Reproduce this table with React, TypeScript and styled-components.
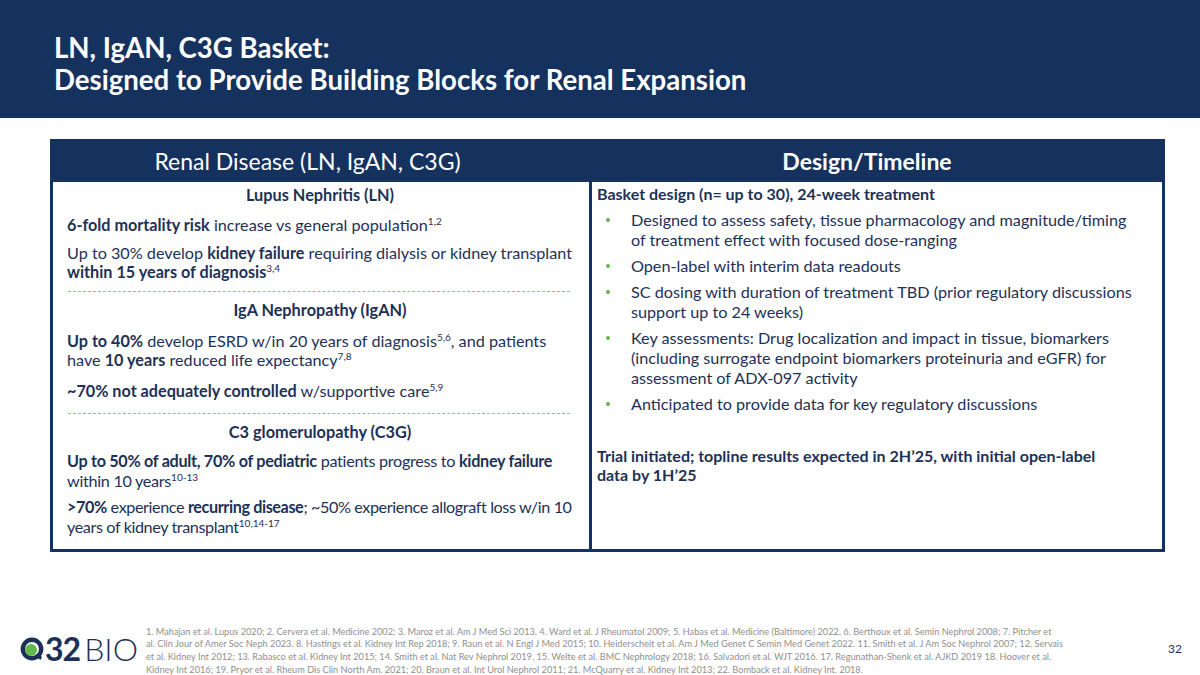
import styled, { createGlobalStyle } from "styled-components";
import { ReactElement, ReactNode } from "react";

const NAVY = "#15325f";
const TEXT = "#1d3157";
const GREEN = "#62b84a";

const GlobalStyle = createGlobalStyle`
    html, body {
        margin: 0;
        padding: 0;
        background: #ffffff;
    }
    body {
        font-family: Lato, "Open Sans", sans-serif;
    }
    * {
        box-sizing: border-box;
    }
`;

const Slide = styled.div`
    width: 1200px;
    height: 675px;
    display: flex;
    flex-direction: column;
    overflow: hidden;
    background: #ffffff;
`;

const TitleBar = styled.header`
    height: 118px;
    flex-shrink: 0;
    background: ${NAVY};
    padding: 32px 54px 0;
`;

const Title = styled.h1`
    margin: 0;
    color: #ffffff;
    font-size: 27.6px;
    font-weight: 700;
    line-height: 32px;
`;

const Table = styled.section`
    margin: 21px 35px 0 50px;
    height: 413px;
    border: 3px solid ${NAVY};
    display: grid;
    grid-template-columns: 539px 1fr;
    grid-template-rows: 40px 1fr;
`;

const HeadCell = styled.div<{ $bold?: boolean; $shift?: number }>`
    background: ${NAVY};
    color: #ffffff;
    display: flex;
    align-items: center;
    justify-content: center;
    font-size: 23px;
    font-weight: ${(p) => (p.$bold ? 700 : 400)};
    padding: 0 ${(p) => p.$shift ?? 0}px 2px 0;
`;

const LeftCell = styled.div`
    border-right: 3px solid ${NAVY};
    padding: 3px 16px 0 14px;
    display: flex;
    flex-direction: column;
    color: ${TEXT};
`;

const RightCell = styled.div`
    padding: 2px 20px 0 5px;
    display: flex;
    flex-direction: column;
    color: ${TEXT};
`;

const SubHead = styled.h3`
    margin: 0;
    font-size: 16.3px;
    font-weight: 700;
    line-height: 20px;
    text-align: center;
`;

const Para = styled.p<{ $top?: number; $ls?: number }>`
    margin: ${(p) => p.$top ?? 9}px 0 0;
    font-size: 16.2px;
    line-height: 19.5px;
    letter-spacing: ${(p) => p.$ls ?? 0}px;
    white-space: nowrap;

    b {
        font-weight: 700;
    }
`;

const Sup = styled.sup`
    font-size: 10px;
    line-height: 0;
    vertical-align: 6px;
    letter-spacing: 0;
`;

const Divider = styled.hr<{ $above?: number }>`
    border: none;
    border-top: 1px dashed #8cc86a;
    margin: ${(p) => p.$above ?? 9}px 0 8px 1px;
    height: 0;
    width: 502px;
`;

const Lead = styled.p<{ $top?: number }>`
    margin: ${(p) => p.$top ?? 0}px 0 0;
    font-size: 16px;
    font-weight: 700;
    line-height: 19.5px;
    white-space: nowrap;
`;

const BulletList = styled.ul`
    list-style: none;
    margin: 6px 0 0;
    padding: 0;
    display: flex;
    flex-direction: column;
    gap: 6px;
`;

const Bullet = styled.li`
    position: relative;
    padding-left: 34px;
    font-size: 16.2px;
    line-height: 20px;
    white-space: nowrap;

    &::before {
        content: "";
        position: absolute;
        left: 9px;
        top: 8px;
        width: 4px;
        height: 4px;
        border-radius: 50%;
        background: ${GREEN};
    }
`;

const Footer = styled.footer`
    margin-top: auto;
    height: 56px;
    display: flex;
    align-items: center;
    padding: 8px 18px 0 20px;
`;

const Logo = styled.div`
    display: flex;
    align-items: center;
    width: 126px;
    flex-shrink: 0;
    color: #1c2f56;
    margin-top: -4px;
`;

const LogoNum = styled.span`
    font-size: 32px;
    font-weight: 700;
    letter-spacing: -1px;
    line-height: 1;
    margin-left: 1px;
`;

const LogoBio = styled.span`
    font-size: 32px;
    font-weight: 300;
    line-height: 1;
    margin-left: 4px;
`;

const Notes = styled.p`
    margin: 0;
    flex: 1;
    font-size: 9.2px;
    line-height: 12.7px;
    color: #8f8f8f;
    white-space: nowrap;
`;

const PageNum = styled.span`
    font-size: 12px;
    color: ${TEXT};
    margin: -6px 0 0 4px;
`;

const QMark = (): ReactElement => (
    <svg width="24" height="26" viewBox="0 0 24 26" aria-hidden="true">
        <circle cx="12" cy="13" r="9.2" fill="none" stroke="#1c2f56" strokeWidth="4.4" />
        <circle cx="11" cy="14" r="6" fill={GREEN} />
        <path d="M15 19.5 L20.5 24 L22 21 L17.5 17.5 Z" fill="#1c2f56" />
    </svg>
);

const Item = ({ children }: { children: ReactNode }): ReactElement => (
    <Bullet>{children}</Bullet>
);

const App = (): ReactElement => {
    return (
        <>
            <GlobalStyle />
            <Slide>
                <TitleBar>
                    <Title>
                        LN, IgAN, C3G Basket:
                        <br />
                        Designed to Provide Building Blocks for Renal Expansion
                    </Title>
                </TitleBar>

                <Table>
                    <HeadCell $shift={30}>Renal Disease (LN, IgAN, C3G)</HeadCell>
                    <HeadCell $bold $shift={20}>Design/Timeline</HeadCell>

                    <LeftCell>
                        <SubHead>Lupus Nephritis (LN)</SubHead>
                        <Para $top={10}>
                            <b>6-fold mortality risk</b> increase vs general population
                            <Sup>1,2</Sup>
                        </Para>
                        <Para $top={8}>
                            Up to 30% develop <b>kidney failure</b> requiring dialysis or kidney transplant
                            <br />
                            <b>within 15 years of diagnosis</b>
                            <Sup>3,4</Sup>
                        </Para>
                        <Divider />
                        <SubHead>IgA Nephropathy (IgAN)</SubHead>
                        <Para $top={11}>
                            <b>Up to 40%</b> develop ESRD w/in 20 years of diagnosis<Sup>5,6</Sup>, and patients
                            <br />
                            have <b>10 years</b> reduced life expectancy<Sup>7,8</Sup>
                        </Para>
                        <Para $top={11}>
                            <b>~70% not adequately controlled</b> w/supportive care<Sup>5,9</Sup>
                        </Para>
                        <Divider $above={13} />
                        <SubHead>C3 glomerulopathy (C3G)</SubHead>
                        <Para $top={9} $ls={-0.3}>
                            <b>Up to 50% of adult, 70% of pediatric</b> patients progress to <b>kidney failure</b>
                            <br />
                            within 10 years<Sup>10-13</Sup>
                        </Para>
                        <Para $top={7} $ls={-0.4}>
                            <b>&gt;70%</b> experience <b>recurring disease</b>; ~50% experience allograft loss w/in 10
                            <br />
                            years of kidney transplant<Sup>10,14-17</Sup>
                        </Para>
                    </LeftCell>

                    <RightCell>
                        <Lead>Basket design (n= up to 30), 24-week treatment</Lead>
                        <BulletList>
                            <Item>
                                Designed to assess safety, tissue pharmacology and magnitude/timing
                                <br />
                                of treatment effect with focused dose-ranging
                            </Item>
                            <Item>Open-label with interim data readouts</Item>
                            <Item>
                                SC dosing with duration of treatment TBD (prior regulatory discussions
                                <br />
                                support up to 24 weeks)
                            </Item>
                            <Item>
                                Key assessments: Drug localization and impact in tissue, biomarkers
                                <br />
                                (including surrogate endpoint biomarkers proteinuria and eGFR) for
                                <br />
                                assessment of ADX-097 activity
                            </Item>
                            <Item>Anticipated to provide data for key regulatory discussions</Item>
                        </BulletList>
                        <Lead $top={32}>
                            Trial initiated; topline results expected in 2H’25, with initial open-label
                            <br />
                            data by 1H’25
                        </Lead>
                    </RightCell>
                </Table>

                <Footer>
                    <Logo>
                        <QMark />
                        <LogoNum>32</LogoNum>
                        <LogoBio>BIO</LogoBio>
                    </Logo>
                    <Notes>
                        1. Mahajan et al. Lupus 2020; 2. Cervera et al. Medicine 2002; 3. Maroz et al. Am J Med Sci 2013. 4. Ward et al. J Rheumatol 2009; 5. Habas et al. Medicine (Baltimore) 2022. 6. Berthoux et al. Semin Nephrol 2008; 7. Pitcher et
                        <br />
                        al. Clin Jour of Amer Soc Neph 2023. 8. Hastings et al. Kidney Int Rep 2018; 9. Raun et al. N Engl J Med 2015; 10. Heiderscheit et al. Am J Med Genet C Semin Med Genet 2022. 11. Smith et al. J Am Soc Nephrol 2007; 12. Servais
                        <br />
                        et al. Kidney Int 2012; 13. Rabasco et al. Kidney Int 2015; 14. Smith et al. Nat Rev Nephrol 2019. 15. Welte et al. BMC Nephrology 2018; 16. Salvadori et al. WJT 2016. 17. Regunathan-Shenk et al. AJKD 2019 18. Hoover et al.
                        <br />
                        Kidney Int 2016; 19. Pryor et al. Rheum Dis Clin North Am. 2021; 20. Braun et al. Int Urol Nephrol 2011; 21. McQuarry et al. Kidney Int 2013; 22. Bomback et al. Kidney Int. 2018.
                    </Notes>
                    <PageNum>32</PageNum>
                </Footer>
            </Slide>
        </>
    );
};

export default App;
